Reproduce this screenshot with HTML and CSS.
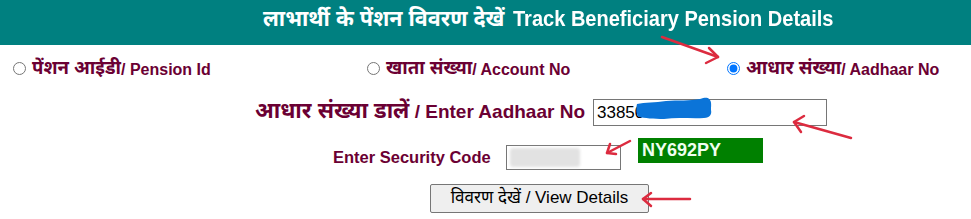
FILE: index.html
```html
<!DOCTYPE html>
<html lang="hi">
<head>
<meta charset="utf-8">
<title>Track Beneficiary Pension Details</title>
<link rel="stylesheet" href="styles.css">
</head>
<body>
<header class="top">
  <h1 class="title"><span class="hi-head">लाभार्थी के पेंशन विवरण देखें</span><span class="en-head">Track Beneficiary Pension Details</span></h1>
</header>
<div class="opts">
  <label class="opt"><input class="radio" type="radio" name="t"><span class="hi">पेंशन आईडी</span>/ Pension Id</label>
  <label class="opt"><input class="radio" type="radio" name="t"><span class="hi">खाता संख्या</span>/ Account No</label>
  <label class="opt"><input class="radio" type="radio" name="t" checked><span class="hi">आधार संख्या</span>/ Aadhaar No</label>
</div>
<div class="row aad">
  <span class="lbl-big"><span class="hi">आधार संख्या डालें</span> / Enter Aadhaar No</span>
  <input class="inp-aad" type="text" value="33850">
</div>
<div class="row sec">
  <span class="lbl">Enter Security Code</span>
  <input class="inp-sec" type="text">
  <span class="captcha">NY692PY</span>
</div>
<div class="row btnrow">
  <button class="btn" type="button"><span class="hi-btn">विवरण देखें</span> / View Details</button>
</div>
<svg class="overlay" width="971" height="219" viewBox="0 0 971 219" aria-hidden="true">
  <defs>
    <filter id="soft" x="-20%" y="-40%" width="140%" height="180%">
      <feGaussianBlur stdDeviation="1.6"/>
    </filter>
  </defs>
  <path class="blob" d="M637 104 C645 102 655 103 666 101 C678 100 690 101 700 99 C704 98 707 97 709 99 C712 101 711 106 711 110 C712 114 710 118 704 118 C692 119 678 117 664 119 C654 119 644 118 639 117 C636 114 636 108 637 104 Z"/>
  <rect class="smudge" x="510" y="148" width="70" height="19" rx="3" filter="url(#soft)"/>
  <g class="arrow">
    <path d="M662 37 L718 57"/>
    <path d="M709 48 L718 57 L706 63"/>
    <path d="M851 138 L794 122"/>
    <path d="M804 116 L794 122 L801 132"/>
    <path d="M630 141 L607 153"/>
    <path d="M610 144 L607 153 L616 154"/>
    <path d="M690 199 L643 199"/>
    <path d="M651 193 L643 199 L651 206"/>
  </g>
</svg>
</body>
</html>
```

FILE: styles.css
```css
html, body {
  margin: 0;
  padding: 0;
  background: #ffffff;
}
body {
  position: relative;
  width: 971px;
  height: 219px;
  overflow: hidden;
  font-family: "Liberation Sans", "Noto Sans Devanagari", "Lohit Devanagari", "FreeSans", sans-serif;
  color: #6b0033;
}
.top {
  height: 45px;
  background: #008080;
  box-sizing: border-box;
  padding: 6px 0 0 263px;
}
.title {
  display: flex;
  align-items: baseline;
  margin: 0;
  font-size: 22px;
  line-height: 26px;
  font-weight: bold;
  color: #ffffff;
  white-space: nowrap;
}
.hi-head {
  font-size: 21.5px;
  margin-right: 9px;
}
.en-head {
  display: inline-block;
  transform: scaleX(0.91);
  transform-origin: left center;
}
.hi {
  font-size: 1.16em;
}
.hi-btn {
  font-size: 1em;
}
.opts {
  display: grid;
  grid-template-columns: 354px 360px 1fr;
  align-items: center;
  height: 47px;
  padding-left: 13px;
}
.opt {
  display: flex;
  align-items: center;
  font-size: 16px;
  font-weight: bold;
  white-space: nowrap;
  padding-top: 2px;
}
.radio {
  width: 13px;
  height: 13px;
  margin: 0 6px 2px 0;
}
.row {
  display: flex;
}
.aad {
  margin-top: 7px;
  padding-left: 200px;
  align-items: center;
  height: 27px;
}
.lbl-big {
  width: 385px;
  text-align: right;
  font-size: 19px;
  font-weight: bold;
  white-space: nowrap;
  margin-right: 8px;
}
.inp-aad {
  box-sizing: border-box;
  width: 234px;
  height: 27px;
  border: 1px solid #767676;
  padding: 0 3px;
  font-family: "Liberation Sans", sans-serif;
  font-size: 17px;
  color: #000000;
  outline: none;
}
.sec {
  margin-top: 12px;
  padding-left: 333px;
  align-items: flex-start;
  height: 32px;
}
.lbl {
  font-size: 16.5px;
  font-weight: bold;
  line-height: 25px;
  margin-top: 7px;
  width: 173px;
  white-space: nowrap;
}
.inp-sec {
  box-sizing: border-box;
  width: 115px;
  height: 25px;
  margin-top: 7px;
  border: 1px solid #767676;
  padding: 0 3px;
  outline: none;
}
.captcha {
  box-sizing: border-box;
  width: 125px;
  height: 25px;
  margin-left: 17px;
  background: #008000;
  color: #f0fff0;
  font-size: 18px;
  font-weight: bold;
  line-height: 20px;
  padding: 2px 0 0 4px;
}
.btnrow {
  margin-top: 14px;
  padding-left: 430px;
}
.btn {
  box-sizing: border-box;
  width: 219px;
  height: 29px;
  padding: 0;
  background: #efefef;
  border: 1px solid #767676;
  border-radius: 2px;
  font-family: "Liberation Sans", "Noto Sans Devanagari", "Lohit Devanagari", sans-serif;
  font-size: 17px;
  color: #000000;
}
.overlay {
  position: absolute;
  top: 0;
  left: 0;
  pointer-events: none;
}
.blob {
  fill: #0b74d8;
}
.smudge {
  fill: #e2e2e2;
}
.arrow path {
  fill: none;
  stroke: #dc2b3f;
  stroke-width: 2.5;
  stroke-linecap: round;
  stroke-linejoin: round;
}
```
